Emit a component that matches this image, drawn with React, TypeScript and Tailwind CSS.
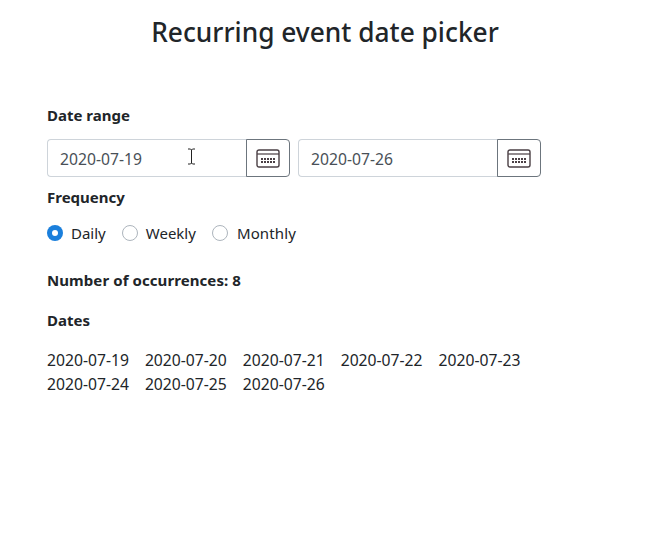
function Cal() {
  return (
    <svg width="24" height="19" viewBox="0 0 24 19" fill="none" className="block">
      <rect x="1" y="1" width="22" height="17" rx="2" stroke="#4a3f44" strokeWidth="1.4" />
      <path d="M1 5H23" stroke="#4a3f44" strokeWidth="1.2" />
      <g fill="#4a3f44">
        {[5, 8, 11, 14, 17].map((x) => <rect key={x} x={x} y="9" width="2" height="2" />)}
        {[5, 8, 11, 14, 17].map((x) => <rect key={x} x={x} y="12" width="2" height="2" />)}
      </g>
    </svg>
  );
}
function DateInput({ value, cursor }: { value: string; cursor?: boolean }) {
  return (
    <div className="relative flex h-[38px] w-[243px]">
      <div className="flex h-full w-[200px] items-center rounded-l-[4px] border border-r-0 border-[#ced4da] pt-px pl-[12px] text-[15.7px] text-[#495057]">{value}</div>
      <div className="flex h-full w-[44px] -ml-px items-center justify-center rounded-r-[4px] border border-[#6c757d]"><Cal /></div>
      {cursor && (
        <svg width="9" height="17" viewBox="0 0 9 17" fill="none" className="absolute left-[140px] top-[9px]">
          <path d="M1 1H3.5L4.5 2L5.5 1H8M4.5 2V15M1 16H3.5L4.5 15L5.5 16H8" stroke="#222" strokeWidth="1" />
        </svg>
      )}
    </div>
  );
}
function Radio({ label, on, labelClass }: { label: string; on?: boolean; labelClass?: string }) {
  return (
    <div className="flex items-center gap-[8px]">
      {on ? (
        <span className="flex h-[16px] w-[16px] items-center justify-center rounded-full bg-[#1a7fdc]"><span className="h-[6px] w-[6px] rounded-full bg-white" /></span>
      ) : (
        <span className="h-[16px] w-[16px] rounded-full border border-[#adb5bd] bg-white" />
      )}
      <span className={labelClass}>{label}</span>
    </div>
  );
}
export default function App() {
  const dates = ["2020-07-19", "2020-07-20", "2020-07-21", "2020-07-22", "2020-07-23", "2020-07-24", "2020-07-25", "2020-07-26"];
  return (
    <div className="h-[548px] w-[647px] bg-white px-[47px] font-['Noto_Sans','Open_Sans',sans-serif] text-[15px] leading-[24px] text-[#212529]">
      <h1 className="pt-[11px] pl-[3px] text-center text-[26.3px] leading-[42px] font-medium">Recurring event date picker</h1>
      <div className="mt-[50px] font-bold">Date range</div>
      <div className="mt-[12px] flex gap-[8px]">
        <DateInput value="2020-07-19" cursor />
        <DateInput value="2020-07-26" />
      </div>
      <div className="mt-[8px] font-bold">Frequency</div>
      <div className="mt-[12px] flex gap-[16px]">
        <Radio label="Daily" on />
        <Radio label="Weekly" />
        <Radio label="Monthly" labelClass="ml-px tracking-[0.15px]" />
      </div>
      <div className="mt-[23px] font-bold tracking-[0.08px]">Number of occurrences: 8</div>
      <div className="mt-[16px] font-bold">Dates</div>
      <div className="mt-[16px] flex w-[500px] flex-wrap gap-x-[16px] text-[15.7px]">
        {dates.map((d) => <span key={d}>{d}</span>)}
      </div>
    </div>
  );
}
